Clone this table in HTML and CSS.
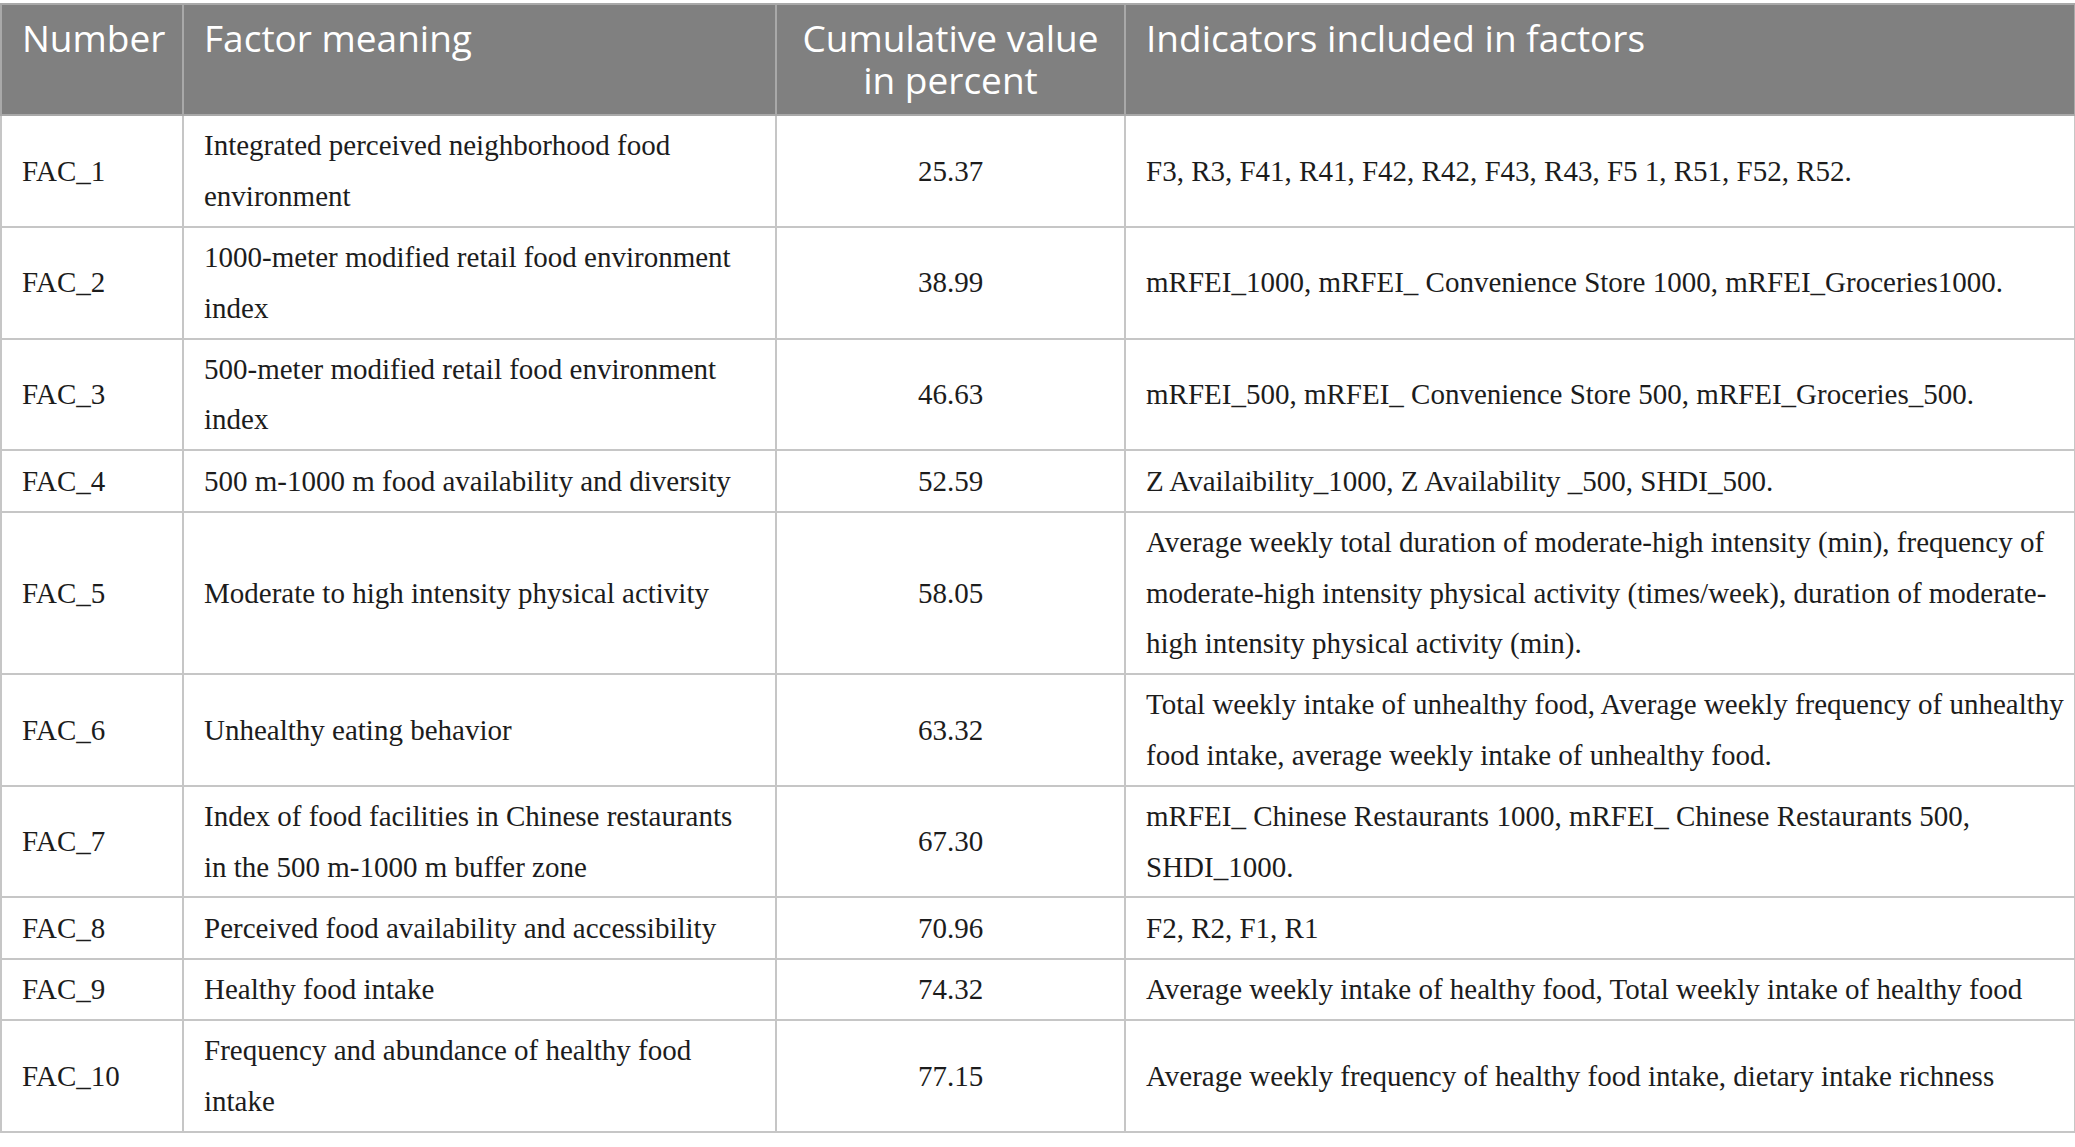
FILE: index.html
```html
<!DOCTYPE html>
<html lang="en">
<head>
<meta charset="utf-8">
<title>Factor analysis</title>
<link rel="stylesheet" href="styles.css">
</head>
<body>
<div class="wrap">
<table class="factors">
  <colgroup>
    <col class="c-num">
    <col class="c-mean">
    <col class="c-cum">
    <col class="c-ind">
  </colgroup>
  <thead>
    <tr>
      <th>Number</th>
      <th>Factor meaning</th>
      <th class="center"><span class="hl">Cumulative value</span><span class="hl">in percent</span></th>
      <th>Indicators included in factors</th>
    </tr>
  </thead>
  <tbody>
    <tr>
      <td>FAC_1</td>
      <td>Integrated perceived neighborhood food<br>environment</td>
      <td class="center">25.37</td>
      <td>F3, R3, F41, R41, F42, R42, F43, R43, F5 1, R51, F52, R52.</td>
    </tr>
    <tr>
      <td>FAC_2</td>
      <td>1000-meter modified retail food environment<br>index</td>
      <td class="center">38.99</td>
      <td>mRFEI_1000, mRFEI_ Convenience Store 1000, mRFEI_Groceries1000.</td>
    </tr>
    <tr>
      <td>FAC_3</td>
      <td>500-meter modified retail food environment<br>index</td>
      <td class="center">46.63</td>
      <td>mRFEI_500, mRFEI_ Convenience Store 500, mRFEI_Groceries_500.</td>
    </tr>
    <tr>
      <td>FAC_4</td>
      <td>500 m-1000 m food availability and diversity</td>
      <td class="center">52.59</td>
      <td>Z Availaibility_1000, Z Availability _500, SHDI_500.</td>
    </tr>
    <tr>
      <td>FAC_5</td>
      <td>Moderate to high intensity physical activity</td>
      <td class="center">58.05</td>
      <td>Average weekly total duration of moderate-high intensity (min), frequency of<br>moderate-high intensity physical activity (times/week), duration of moderate-<br>high intensity physical activity (min).</td>
    </tr>
    <tr>
      <td>FAC_6</td>
      <td>Unhealthy eating behavior</td>
      <td class="center">63.32</td>
      <td>Total weekly intake of unhealthy food, Average weekly frequency of unhealthy<br>food intake, average weekly intake of unhealthy food.</td>
    </tr>
    <tr>
      <td>FAC_7</td>
      <td>Index of food facilities in Chinese restaurants<br>in the 500 m-1000 m buffer zone</td>
      <td class="center">67.30</td>
      <td>mRFEI_ Chinese Restaurants 1000, mRFEI_ Chinese Restaurants 500,<br>SHDI_1000.</td>
    </tr>
    <tr>
      <td>FAC_8</td>
      <td>Perceived food availability and accessibility</td>
      <td class="center">70.96</td>
      <td>F2, R2, F1, R1</td>
    </tr>
    <tr>
      <td>FAC_9</td>
      <td>Healthy food intake</td>
      <td class="center">74.32</td>
      <td>Average weekly intake of healthy food, Total weekly intake of healthy food</td>
    </tr>
    <tr>
      <td>FAC_10</td>
      <td>Frequency and abundance of healthy food<br>intake</td>
      <td class="center">77.15</td>
      <td>Average weekly frequency of healthy food intake, dietary intake richness</td>
    </tr>
  </tbody>
</table>
</div>
</body>
</html>
```

FILE: styles.css
```css
html, body {
  margin: 0;
  padding: 0;
  background: #ffffff;
}

.wrap {
  padding: 3px 0 0 0;
}

.factors {
  width: 2074px;
  border-collapse: collapse;
  table-layout: fixed;
  font-family: "Liberation Serif", "Times New Roman", serif;
  font-size: 29px;
  color: #1c1c1c;
}

.c-num { width: 182px; }
.c-mean { width: 593px; }
.c-cum { width: 349px; }
.c-ind { width: 950px; }

.factors th {
  background: #808080;
  color: #ffffff;
  font-family: "Open Sans", "Noto Sans", sans-serif;
  font-weight: 400;
  font-size: 37px;
  line-height: 42px;
  text-align: left;
  vertical-align: top;
  padding: 12px 20px 13px 20px;
  border: 2px solid #a9a9a9;
  height: 84px;
}

.factors .hl {
  display: block;
  line-height: 42px;
}

.factors td {
  border: 2px solid #c6c6c6;
  padding: 4.4px 20px;
  line-height: 50.5px;
  vertical-align: middle;
  white-space: nowrap;
}

.factors .center {
  text-align: center;
}
```
